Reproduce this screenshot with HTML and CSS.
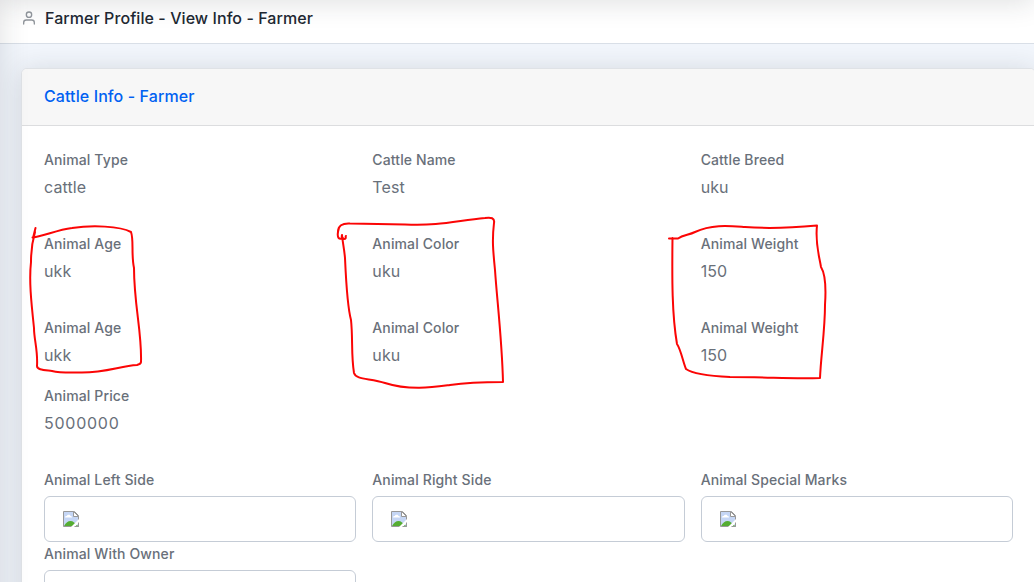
FILE: index.html
```html
<!DOCTYPE html>
<html lang="en">
<head>
<meta charset="utf-8">
<title>Farmer Profile - View Info - Farmer</title>
<link rel="stylesheet" href="styles.css">
</head>
<body>
<svg class="symbols" aria-hidden="true">
  <symbol id="broken" viewBox="0 0 16 16">
    <path d="M.5 15.5V.5h11l4 4v11z" fill="#c5d6f5" stroke="#989898"/>
    <path d="M2 6.500c0-1 .8-1.600 1.700-1.400C4.200 3.500 7.200 3.100 7.500 5c1 0 1.500.700 1.500 1.500z" fill="#fff"/>
    <path d="M1 15c2-3.500 4-5 6.500-5S12 12 15 15z" fill="#55ad32"/>
    <path d="M10.500.500v5h5z" fill="#fff" stroke="#989898"/>
    <path d="M8 16l8-8v3.500L12 16z" fill="#fff"/>
    <path d="M11.500 15.500h4v-4" fill="none" stroke="#989898"/>
  </symbol>
</svg>
<header class="page-header">
  <svg class="user-icon" viewBox="0 0 24 24"><path d="M20 21v-2a4 4 0 0 0-4-4H8a4 4 0 0 0-4 4v2"/><circle cx="12" cy="7" r="4"/></svg>
  <h1 class="page-title">Farmer Profile - View Info - Farmer</h1>
</header>
<main class="content">
  <section class="card">
    <h2 class="card-header">Cattle Info - Farmer</h2>
    <div class="card-body">
      <div class="row">
        <div class="field"><div class="label">Animal Type</div><div class="value">cattle</div></div>
        <div class="field"><div class="label">Cattle Name</div><div class="value">Test</div></div>
        <div class="field"><div class="label">Cattle Breed</div><div class="value">uku</div></div>
      </div>
      <div class="row">
        <div class="field"><div class="label">Animal Age</div><div class="value">ukk</div></div>
        <div class="field"><div class="label">Animal Color</div><div class="value">uku</div></div>
        <div class="field"><div class="label">Animal Weight</div><div class="value">150</div></div>
      </div>
      <div class="row row-tight">
        <div class="field"><div class="label">Animal Age</div><div class="value">ukk</div></div>
        <div class="field"><div class="label">Animal Color</div><div class="value">uku</div></div>
        <div class="field"><div class="label">Animal Weight</div><div class="value">150</div></div>
      </div>
      <div class="row">
        <div class="field"><div class="label">Animal Price</div><div class="value price">5000000</div></div>
      </div>
      <div class="row row-media">
        <div class="field"><div class="label">Animal Left Side</div><div class="media"><svg class="broken"><use href="#broken"/></svg></div></div>
        <div class="field"><div class="label">Animal Right Side</div><div class="media"><svg class="broken"><use href="#broken"/></svg></div></div>
        <div class="field"><div class="label">Animal Special Marks</div><div class="media"><svg class="broken"><use href="#broken"/></svg></div></div>
      </div>
      <div class="row row-media">
        <div class="field"><div class="label">Animal With Owner</div><div class="media media-open"></div></div>
      </div>
    </div>
  </section>
</main>
<div class="topnav-edge"></div>
<div class="sidenav-edge"></div>
<svg class="annotations" viewBox="0 0 1034 582">
  <path d="M35.500 228L33 238M32.500 237.500C45 236 56 230 72 228C92 225 120 226 131 232C134 240 131 254 134 268C134 305 142 332 141 362Q141 364 137 365C120 366 105 373 80 372.500C68 372.500 60 373 52 371C44 370 37 370 37 366C38 350 34 340 34 328C31 300 29 280 31 262Q31 246 35 232"/>
  <path d="M342 235Q341 239 344 239C347 239 345 236 346 236M342 235C343 245 344 247 345 258C346 280 347 305 351 320C353 338 351 355 354 373C356 380 370 378 385 383C410 391 435 387 450 385C470 382 485 382 503 382C502 340 497 300 495 270C493 250 492 240 494 223C495 218 491 217 485 218C455 221 440 226 405 224.500L350 223.500C342 223 338 226 338 232C337 238 339 240 343 238"/>
  <path d="M669 238.500H678C683 235 689 235 695 232C712 224 730 226 745 227C770 229 790 228 817 225.500C815 243 819 255 821 267C826 275 826 290 825 305C825 330 821 355 820 378C790 379 770 377 730 377C710 376 693 374 686 369C683 362 681 350 677 344C672 315 672 280 672.500 238"/>
</svg>
</body>
</html>
```
FILE: styles.css
```css
* { box-sizing: border-box; }

body {
  margin: 0;
  height: 582px;
  overflow: hidden;
  background: #f2f6fc;
  color: #69707a;
  font: 400 16px/24px Inter, "Noto Sans", sans-serif;
}

.symbols { position: absolute; width: 0; height: 0; }

.page-header {
  display: flex;
  align-items: center;
  gap: 8px;
  height: 44px;
  padding: 0 21px 7px;
  background: #fff;
  border-bottom: 1px solid #d9dfe7;
}

.user-icon {
  width: 16px;
  height: 16px;
  fill: none;
  stroke: #92979d;
  stroke-width: 2;
  stroke-linecap: round;
  stroke-linejoin: round;
}

.page-title {
  margin: 0;
  color: #212832;
  font-size: 16px;
  font-weight: 500;
  letter-spacing: .07px;
}

.content {
  height: 538px;
  padding: 24px 0 0 21px;
  overflow: hidden;
}

.card {
  width: 1015px;
  background: #fff;
  border: 1px solid #dfe2e6;
  border-radius: 6px;
  box-shadow: 0 2px 28px rgba(33, 40, 50, .15);
}

.card-header {
  margin: 0;
  padding: 15px 22px 17px;
  height: 57px;
  color: #0061f2;
  background: #f7f7f7;
  border-bottom: 1px solid #dcdddf;
  border-radius: 5px 5px 0 0;
  font-size: 16px;
  font-weight: 500;
  letter-spacing: .1px;
}

.card-body { padding: 24px 22px; }

.row {
  display: grid;
  grid-template-columns: repeat(3, 1fr);
  gap: 16px;
  width: 969px;
  height: 84px;
}

.row-tight { height: 68px; }
.row-media { height: 74px; }

.label {
  font-size: 14px;
  line-height: 20px;
  font-weight: 500;
  letter-spacing: .12px;
}

.value { padding-top: 5px; letter-spacing: .1px; }
.price { letter-spacing: .75px; }

.media {
  height: 46px;
  margin-top: 6px;
  padding: 14px 18px;
  border: 1px solid #c5ccd6;
  border-radius: 6px;
}

.broken { display: block; width: 16px; height: 16px; }

.topnav-edge,
.sidenav-edge {
  position: absolute;
  box-shadow: 0 2px 28px rgba(33, 40, 50, .15);
  pointer-events: none;
}

.topnav-edge { top: -60px; left: 0; width: 100%; height: 60px; }
.sidenav-edge { top: -60px; left: -240px; width: 240px; height: 720px; }

.annotations {
  position: absolute;
  inset: 0;
  width: 1034px;
  height: 582px;
  fill: none;
  stroke: #fb0505;
  stroke-width: 2;
  stroke-linecap: round;
  stroke-linejoin: round;
  pointer-events: none;
}
```
